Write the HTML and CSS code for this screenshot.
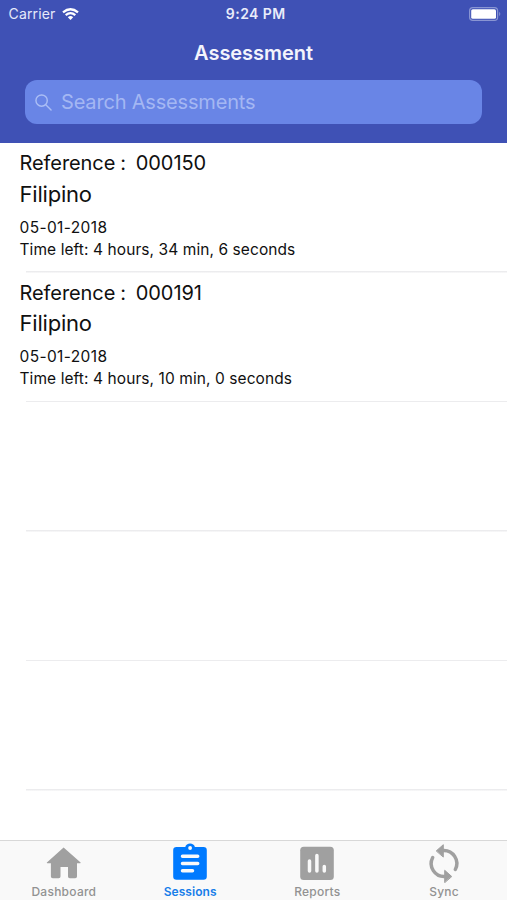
FILE: index.html
```html
<!DOCTYPE html>
<html lang="en">
<head>
<meta charset="utf-8">
<title>Assessment</title>
<link rel="stylesheet" href="styles.css">
</head>
<body>
<div class="screen">
  <header class="header">
    <div class="status">
      <div class="carrier"><span>Carrier</span>
        <svg class="wifi" viewBox="0 0 17 12" fill="none" stroke="#fff" stroke-width="2.3"><path d="M1 4.4Q8.5-1.9 16 4.4M3.7 7.1Q8.5 3.1 13.3 7.1"/><path d="M5.8 9.2Q8.5 6.9 11.2 9.2L8.5 12Z" fill="#fff" stroke="none"/></svg>
      </div>
      <span class="time">9:24 PM</span>
      <svg class="battery" viewBox="0 0 32 14"><rect x=".6" y=".6" width="28" height="12.8" rx="3.2" fill="none" stroke="#8995d3" stroke-width="1.2"/><rect x="2.2" y="2.2" width="24.8" height="9.6" rx="1.6" fill="#fff"/><path d="M30.2 4.8Q32.4 7 30.2 9.2Z" fill="#8995d3"/></svg>
    </div>
    <h1 class="title">Assessment</h1>
    <div class="search">
      <svg class="glass" viewBox="0 0 18 18" fill="none" stroke="#abbef5" stroke-width="1.5" stroke-linecap="round"><circle cx="7" cy="7" r="6"/><path d="M11.4 11.4L17 17"/></svg>
      <span class="placeholder">Search Assessments</span>
    </div>
  </header>
  <main class="list">
    <article class="row">
      <div class="ref">Reference :&nbsp; 000150</div>
      <div class="name">Filipino</div>
      <div class="date">05-01-2018</div>
      <div class="left">Time left: 4 hours, 34 min, 6 seconds</div>
    </article>
    <article class="row">
      <div class="ref">Reference :&nbsp; 000191</div>
      <div class="name">Filipino</div>
      <div class="date">05-01-2018</div>
      <div class="left">Time left: 4 hours, 10 min, 0 seconds</div>
    </article>
    <div class="row"></div>
    <div class="row"></div>
    <div class="row"></div>
  </main>
  <nav class="tabs">
    <a class="tab">
      <svg class="icon" viewBox="0 0 40 40" fill="currentColor"><path d="M20.6 4.5L37.600 19.500Q37.900 20.300 37.100 20.300H34V33.500Q34 35.300 32.200 35.300H26.800Q25 35.300 25 33.500V24H17.500V33.500Q17.500 35.300 15.700 35.300H9.700Q7.900 35.300 7.900 33.500V20.300H4.300Q3.400 20.300 3.900 19.500Z"/></svg>
      <span class="label">Dashboard</span>
    </a>
    <a class="tab active">
      <svg class="icon" viewBox="0 0 40 40"><path fill="currentColor" d="M6.500 4H15.300C16-.8 24.200-.8 24.900 4H33.500Q36.800 4 36.800 7.300V33.500Q36.800 36.800 33.500 36.800H6.500Q3.200 36.800 3.200 33.500V7.300Q3.200 4 6.500 4Z"/><circle cx="20.100" cy="5" r="1.900" fill="#f9f9f9"/><path d="M12.500 13.200H27.700M12.500 20.400H27.700M12.500 27.800H22.500" stroke="#f9f9f9" stroke-width="3.500" stroke-linecap="round"/></svg>
      <span class="label">Sessions</span>
    </a>
    <a class="tab">
      <svg class="icon" viewBox="0 0 40 40"><rect x="3.200" y="3.700" width="33.600" height="33.200" rx="3.500" fill="currentColor"/><path d="M12.500 18V28M19.900 12.500V28M27.300 23.500V28" stroke="#f9f9f9" stroke-width="3.500" stroke-linecap="round"/></svg>
      <span class="label">Reports</span>
    </a>
    <a class="tab">
      <svg class="icon" viewBox="0 0 40 40" fill="none" stroke="currentColor" stroke-width="3.500" stroke-linecap="round"><path d="M19 7.500A13 13 0 0 1 31.300 26.500M8.700 14.500A13 13 0 0 0 21 33.500"/><path fill="currentColor" stroke-width="1" stroke-linejoin="round" d="M12.500 7.700L19.300 1.700V13.700ZM27.500 33.300L20.700 27.300V39.300Z"/></svg>
      <span class="label">Sync</span>
    </a>
  </nav>
</div>
</body>
</html>
```
FILE: styles.css
```css
* { box-sizing: border-box; }
body { margin: 0; font-family: Inter, "Liberation Sans", sans-serif; }
.screen { width: 507px; height: 900px; display: flex; flex-direction: column; background: #fff; overflow: hidden; }
.header { height: 142.5px; background: #3f51b5; color: #fff; flex: none; }
.status { height: 27px; display: grid; grid-template-columns: 1fr auto 1fr; align-items: center; padding: 0 6px 0 8.5px; font-size: 14px; }
.carrier { display: flex; align-items: center; gap: 6.5px; color: #e6e9fa; letter-spacing: .15px; }
.wifi { width: 17px; height: 12px; }
.time { font-weight: 600; font-size: 14px; letter-spacing: .45px; color: #e9ecfa; padding-left: 2px; }
.battery { width: 32px; height: 14px; justify-self: end; }
.title { margin: 0; padding-top: 1px; height: 53.4px; line-height: 50px; text-align: center; font-size: 20px; font-weight: 600; letter-spacing: -.05px; color: #f3f4fc; }
.search { margin: 0 25px; height: 44px; border-radius: 12px; background: #6985e6; display: flex; align-items: center; padding-left: 10px; gap: 9px; }
.glass { width: 17px; height: 17px; }
.placeholder { color: #a4b7f3; font-size: 20px; line-height: 43px; letter-spacing: -.18px; }
.list { flex: 1; min-height: 0; overflow: hidden; color: #101010; padding-top: .6px; }
.row { height: 129.5px; padding: 6px 0 0 19.5px; background: linear-gradient(#ececee, #ececee) 26px 100% / 100% 1.5px no-repeat; }
.ref { font-size: 20px; line-height: 29.4px; letter-spacing: -.08px; word-spacing: -.6px; }
.name { font-size: 22px; line-height: 30px; letter-spacing: -.2px; }
.date { font-size: 15.5px; line-height: 22px; margin-top: 8px; letter-spacing: .37px; }
.left { font-size: 15.5px; line-height: 22px; letter-spacing: .08px; }
.tabs { flex: none; height: 60.5px; background: #f9f9f9; border-top: 1px solid #d8d8d8; display: grid; grid-template-columns: repeat(4, 1fr); }
.tab { display: flex; flex-direction: column; align-items: center; color: #a0a0a0; padding-top: 2px; }
.active { color: #007aff; }
.icon { width: 40px; height: 40px; flex: none; margin-bottom: 1px; }
.label { font-size: 12px; line-height: 16px; font-weight: 500; letter-spacing: .25px; color: #929292; padding-left: 1px; }
.active .label { color: #187ee9; font-weight: 600; letter-spacing: .05px; padding-left: 0; }
```
